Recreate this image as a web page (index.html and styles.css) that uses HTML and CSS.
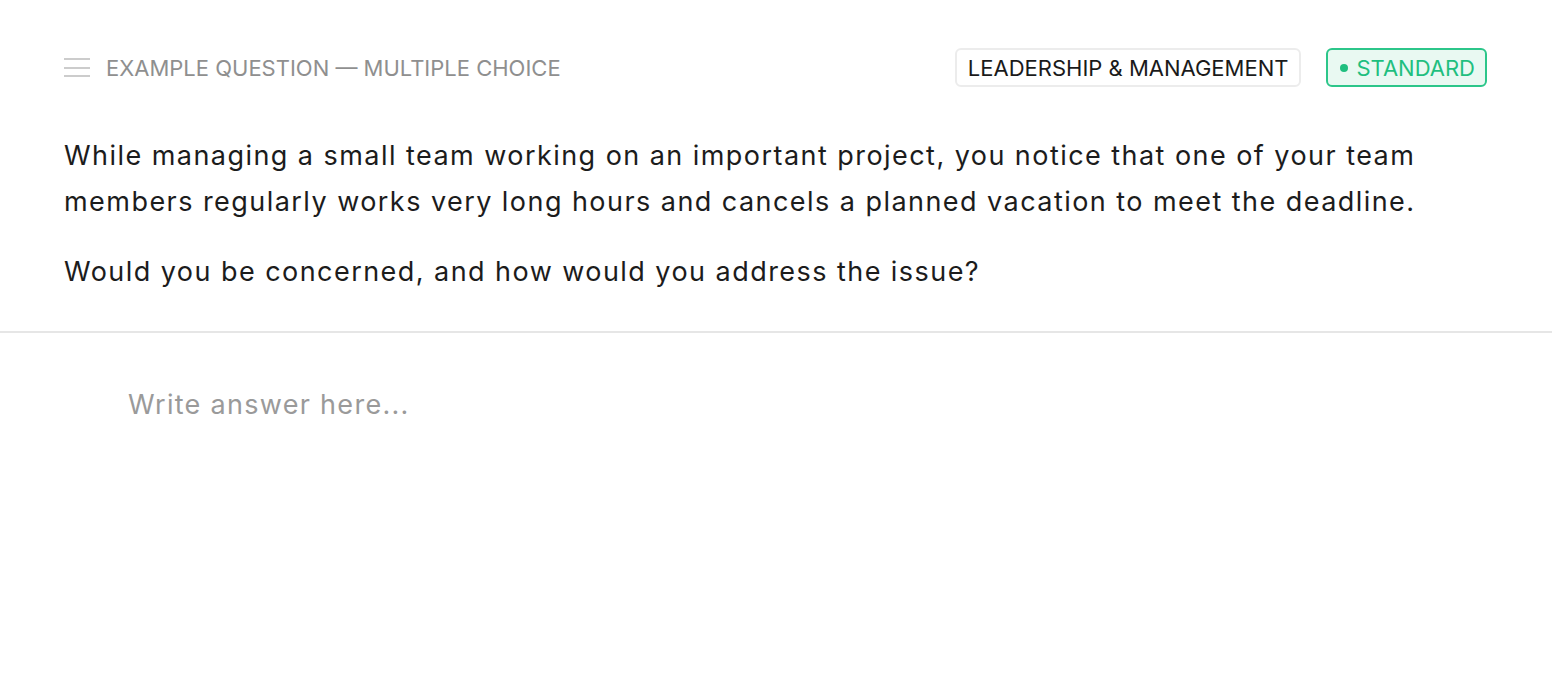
FILE: index.html
```html
<!DOCTYPE html>
<html lang="en">
<head>
<meta charset="utf-8">
<title>Example question</title>
<link rel="stylesheet" href="styles.css">
</head>
<body>
<main class="card">
  <section class="question">
    <header class="q-header">
      <div class="q-title">
        <span class="menu-icon" aria-hidden="true"><span></span><span></span><span></span></span>
        <span class="q-label">EXAMPLE QUESTION — MULTIPLE CHOICE</span>
      </div>
      <div class="q-tags">
        <span class="tag">LEADERSHIP &amp; MANAGEMENT</span>
        <span class="tag tag-green"><span class="dot"></span>STANDARD</span>
      </div>
    </header>
    <div class="q-body">
      <p>While managing a small team working on an important project, you notice that one of your team members regularly works very long hours and cancels a planned vacation to meet the deadline.</p>
      <p>Would you be concerned, and how would you address the issue?</p>
    </div>
  </section>
  <section class="answer">
    <div class="placeholder">Write answer here...</div>
  </section>
</main>
</body>
</html>
```

FILE: styles.css
```css
* { box-sizing: border-box; }
html, body { margin: 0; padding: 0; background: #ffffff; }
body {
  font-family: Inter, "Liberation Sans", sans-serif;
  color: #1a1a1a;
}
.question {
  padding: 48px 64px 0 64px;
  border-bottom: 2px solid #e6e6e6;
}
.q-header {
  display: flex;
  justify-content: space-between;
  align-items: center;
  height: 39px;
}
.q-title {
  display: flex;
  align-items: center;
  gap: 16px;
}
.menu-icon {
  display: flex;
  flex-direction: column;
  gap: 6.5px;
  width: 26px;
}
.menu-icon span {
  display: block;
  height: 2px;
  background: #cccccc;
}
.q-label {
  font-size: 22px;
  color: #8f8f8f;
}
.q-tags {
  display: flex;
  gap: 25px;
  margin-right: 1px;
}
.tag {
  display: inline-flex;
  align-items: center;
  height: 39px;
  padding: 0 11px;
  border: 2px solid #ececec;
  border-radius: 6px;
  font-size: 22px;
  color: #1a1a1a;
}
.tag-green {
  border-color: #2cc68a;
  background: #e9f9f2;
  color: #1fbf7f;
  padding: 0 10px 0 12px;
}
.dot {
  width: 8px;
  height: 8px;
  border-radius: 50%;
  background: #1fbf7f;
  margin-right: 8px;
}
.q-body {
  padding: 46px 0 36px 0;
}
.q-body p {
  margin: 0 0 24px 0;
  font-size: 27px;
  letter-spacing: 1.45px;
  line-height: 46px;
  color: #1c1c1c;
}
.q-body p:last-child { margin-bottom: 0; }
.answer {
  padding: 48px 128px;
}
.placeholder {
  font-size: 27px;
  letter-spacing: 1.3px;
  color: #9a9a9a;
  line-height: 48px;
}
```
